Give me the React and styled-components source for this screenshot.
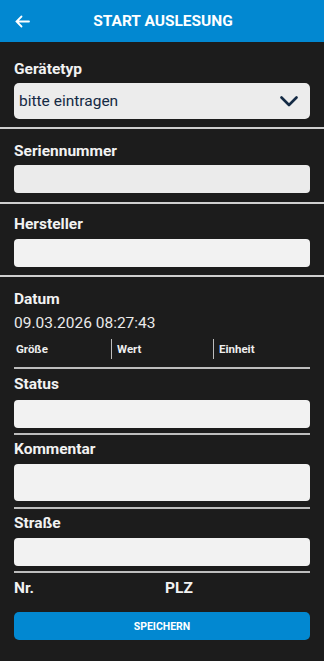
import React from 'react'
import styled, { createGlobalStyle } from 'styled-components'

const GlobalStyle = createGlobalStyle`
  body {
    margin: 0;
    background: #1c1c1c;
    font-family: Roboto, 'Liberation Sans', sans-serif;
  }
`

const Screen = styled.div`
  width: 324px;
  min-height: 661px;
  background: #1c1c1c;
  color: #f2f2f2;
`
const Header = styled.header`
  height: 42px;
  background: #0288d1;
  display: flex;
  align-items: center;
`
const BackButton = styled.button`
  background: none;
  border: 0;
  padding: 0;
  margin-left: 13px;
  width: 18px;
  height: 18px;
  display: flex;
  align-items: center;
  justify-content: center;
`
const Title = styled.h1`
  flex: 1;
  margin: 0;
  padding-right: 29px;
  text-align: center;
  font-size: 15.5px;
  font-weight: 700;
  color: #fff;
`
const Section = styled.section`
  padding: ${p => p.pad || '0 14px'};
  border-bottom: ${p => (p.full ? '2px solid #cfcfcf' : 'none')};
`
const Inset = styled.div`
  margin: 0 14px;
  border-bottom: 2px solid #bdbdbd;
`
const Label = styled.div`
  font-size: 15.5px;
  font-weight: 700;
  color: #f2f2f2;
  line-height: 18px;
  margin-bottom: ${p => p.mb || '6px'};
`
const Input = styled.div`
  height: ${p => p.h || 28}px;
  background: ${p => p.bg || '#f2f2f2'};
  border-radius: 4px;
`
const Select = styled.div`
  height: 36px;
  background: #ececec;
  border-radius: 5px;
  display: flex;
  align-items: center;
  justify-content: space-between;
  padding: 0 12px 0 5px;
  color: #142a44;
  font-size: 15.5px;
`
const DateText = styled.div`
  font-size: 15.5px;
  line-height: 19px;
  color: #eaeaea;
  margin-top: 6px;
`
const Grid = styled.div`
  display: grid;
  grid-template-columns: 97px 102px 1fr;
  margin-top: 6px;
  padding-bottom: 8px;
  border-bottom: 2px solid #bdbdbd;
`
const Cell = styled.div`
  font-size: 11.5px;
  font-weight: 700;
  color: #eeeeee;
  height: 20px;
  display: flex;
  align-items: center;
  padding-left: ${p => (p.first ? '2px' : '5px')};
  border-left: ${p => (p.first ? 'none' : '1.5px solid #bdbdbd')};
`
const Pair = styled.div`
  display: grid;
  grid-template-columns: 151px 1fr;
  padding: 6px 14px 0;
`
const Button = styled.button`
  display: block;
  width: 296px;
  height: 28px;
  margin: 15px 14px 0;
  background: #0288d1;
  border: 0;
  border-radius: 5px;
  color: #fff;
  font-family: Roboto, 'Liberation Sans', sans-serif;
  font-weight: 700;
  font-size: 10.5px;
`

const App = () => (
  <Screen>
    <GlobalStyle />
    <Header>
      <BackButton>
        <svg width="15" height="13" viewBox="0 0 15 13" fill="none" stroke="#fff" strokeWidth="1.8" strokeLinecap="round">
          <path d="M14 6.5H1.5M6.5 1.5L1.5 6.5L6.5 11.5" />
        </svg>
      </BackButton>
      <Title>START AUSLESUNG</Title>
    </Header>

    <Section full pad="18px 14px 8px">
      <Label mb="5px">Gerätetyp</Label>
      <Select>
        <span>bitte eintragen</span>
        <svg width="18" height="11" viewBox="0 0 18 11" fill="none" stroke="#142a44" strokeWidth="2.6" strokeLinecap="round" strokeLinejoin="round">
          <path d="M1.5 1.5L9 9L16.5 1.5" />
        </svg>
      </Select>
    </Section>

    <Section full pad="13px 14px 9px">
      <Label mb="5px">Seriennummer</Label>
      <Input bg="#ebebeb" />
    </Section>

    <Section full pad="11px 14px 8px">
      <Label mb="6px">Hersteller</Label>
      <Input h={28} />
    </Section>

    <Section pad="13px 14px 0">
      <Label mb="0">Datum</Label>
      <DateText>09.03.2026 08:27:43</DateText>
      <Grid>
        <Cell first>Größe</Cell>
        <Cell>Wert</Cell>
        <Cell>Einheit</Cell>
      </Grid>
    </Section>

    <Section pad="6px 14px 5px">
      <Label mb="7px">Status</Label>
      <Input h={28} />
    </Section>
    <Inset />

    <Section pad="5px 14px 6px">
      <Label mb="6px">Kommentar</Label>
      <Input h={37} />
    </Section>
    <Inset />

    <Section pad="5px 14px 5px">
      <Label mb="6px">Straße</Label>
      <Input h={28} />
    </Section>
    <Inset />

    <Pair>
      <Label mb="0">Nr.</Label>
      <Label mb="0">PLZ</Label>
    </Pair>

    <Button>SPEICHERN</Button>
  </Screen>
)

export default App
